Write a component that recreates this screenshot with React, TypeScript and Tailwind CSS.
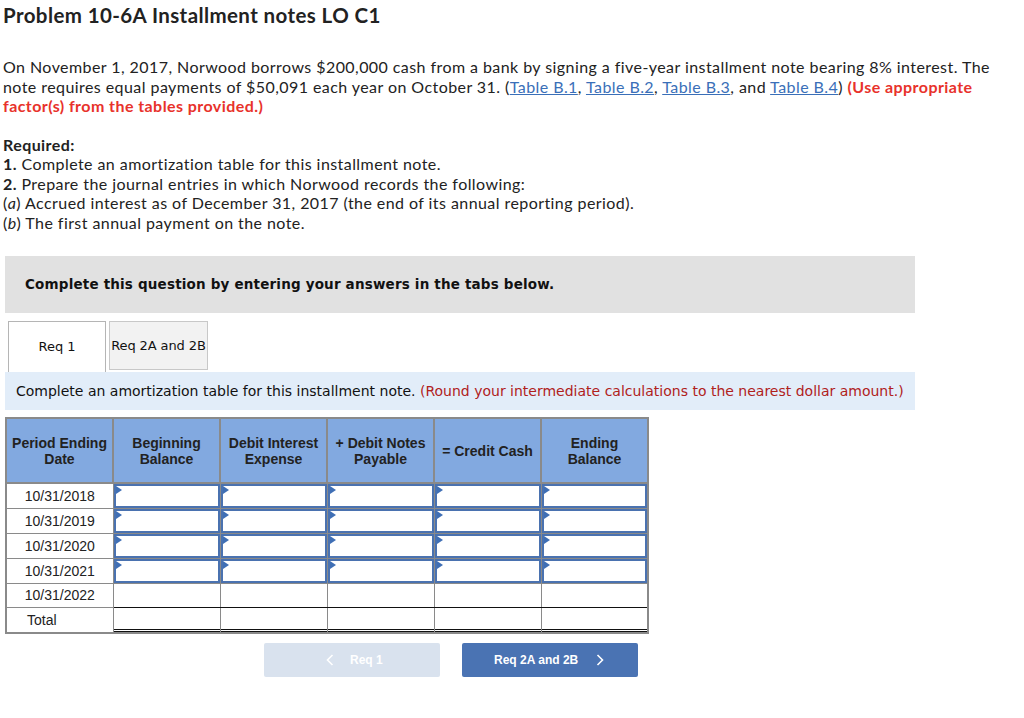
import React from "react";

const dates = ["10/31/2018", "10/31/2019", "10/31/2020", "10/31/2021", "10/31/2022", "Total"];
const headers = [
  ["Period Ending", "Date"],
  ["Beginning", "Balance"],
  ["Debit Interest", "Expense"],
  ["+ Debit Notes", "Payable"],
  ["= Credit Cash"],
  ["Ending", "Balance"],
];

function InputCell() {
  return (
    <td className="border border-[#8a8a8a] p-0 h-[24px] bg-white">
      <div className="relative h-[24px] border-2 border-[#4a72b0] bg-white">
        <svg className="absolute left-0 top-0" width="6" height="8" viewBox="0 0 6 8">
          <polygon points="0,0 6,4 0,8" fill="#3f6fb5" />
        </svg>
      </div>
    </td>
  );
}

function Chevron({ dir }: { dir: "left" | "right" }) {
  return (
    <svg width="8" height="12" viewBox="0 0 8 12" fill="none" stroke="white" strokeWidth="1.6">
      {dir === "left" ? <polyline points="6.5,1 1.5,6 6.5,11" /> : <polyline points="1.5,1 6.5,6 1.5,11" />}
    </svg>
  );
}

export default function App() {
  return (
    <div className="w-[1024px] h-[718px] bg-white text-[#222] relative overflow-hidden">
      <div className="pl-[3px] pt-[4px]" style={{ fontFamily: 'Lato, "Open Sans", sans-serif' }}>
        <h1 className="text-[20.5px] font-bold leading-[22px] tracking-[0.4px] text-[#222]">
          Problem 10-6A Installment notes LO C1
        </h1>
        <div className="mt-[31px] text-[16px] leading-[19.5px] tracking-[0.43px] text-[#222]">
          <div className="whitespace-nowrap">
            On November 1, 2017, Norwood borrows $200,000 cash from a bank by signing a five-year installment note bearing 8% interest. The
          </div>
          <div className="whitespace-nowrap">
            note requires equal payments of $50,091 each year on October 31. (
            <span className="text-[#3a6fb8] underline">Table B.1</span>,{" "}
            <span className="text-[#3a6fb8] underline">Table B.2</span>,{" "}
            <span className="text-[#3a6fb8] underline">Table B.3</span>, and{" "}
            <span className="text-[#3a6fb8] underline">Table B.4</span>){" "}
            <span className="text-[#e8322b] font-bold">(Use appropriate</span>
          </div>
          <div className="whitespace-nowrap text-[#e8322b] font-bold">factor(s) from the tables provided.)</div>
        </div>
        <div className="mt-[19px] text-[16px] leading-[19.5px] tracking-[0.43px] text-[#222]">
          <div className="font-bold">Required:</div>
          <div>
            <span className="font-bold">1.</span> Complete an amortization table for this installment note.
          </div>
          <div>
            <span className="font-bold">2.</span> Prepare the journal entries in which Norwood records the following:
          </div>
          <div>
            (<i>a</i>) Accrued interest as of December 31, 2017 (the end of its annual reporting period).
          </div>
          <div>
            (<i>b</i>) The first annual payment on the note.
          </div>
        </div>
      </div>

      <div className="ml-[5px] mt-[24px] w-[910px]">
        <div
          className="h-[57px] bg-[#e1e1e1] flex items-center pl-[20px] text-[13.5px] tracking-[0.18px] font-bold text-[#111]"
          style={{ fontFamily: '"DejaVu Sans", Verdana, sans-serif' }}
        >
          Complete this question by entering your answers in the tabs below.
        </div>
        <div
          className="flex mt-[8px] ml-[3px] gap-[3px] text-[13px] text-[#111]"
          style={{ fontFamily: '"DejaVu Sans", Verdana, sans-serif' }}
        >
          <div className="w-[98px] h-[51px] border border-b-0 border-[#b5b5b5] bg-white flex items-center justify-center">
            Req 1
          </div>
          <div className="w-[99px] h-[49px] border border-[#c8c8c8] bg-[#f2f2f2] flex items-center justify-center tracking-[-0.1px]">
            Req 2A and 2B
          </div>
        </div>
        <div
          className="h-[38px] bg-[#e2edf9] flex items-center pl-[11px] text-[14px] text-[#111]"
          style={{ fontFamily: '"DejaVu Sans", Verdana, sans-serif' }}
        >
          Complete an amortization table for this installment note.&nbsp;
          <span className="text-[#b0211c]">(Round your intermediate calculations to the nearest dollar amount.)</span>
        </div>
      </div>

      <div className="ml-[5px] mt-[7px]" style={{ fontFamily: '"Liberation Sans", Arial, sans-serif' }}>
        <table className="border-collapse border-2 border-[#8a8a8a] text-[14px] text-[#222]">
          <thead>
            <tr>
              {headers.map((h, i) => (
                <th
                  key={i}
                  className="w-[107px] h-[65px] border-2 border-[#8a8a8a] bg-[#82a9e0] font-bold text-[14px] leading-[16px] text-[#222] p-0"
                >
                  {h.map((l, j) => (
                    <div key={j}>{l}</div>
                  ))}
                </th>
              ))}
            </tr>
          </thead>
          <tbody>
            {dates.map((d, r) => (
              <tr key={d}>
                <td
                  className={`h-[24px] border border-[#8a8a8a] p-0 ${
                    d === "Total" ? "text-left pl-[20px]" : "text-center"
                  }`}
                >
                  {d}
                </td>
                {[0, 1, 2, 3, 4].map((c) =>
                  r < 4 ? (
                    <InputCell key={c} />
                  ) : r === 4 ? (
                    <td key={c} className="h-[24px] border border-[#8a8a8a] border-b-[#111] p-0" />
                  ) : (
                    <td key={c} className="h-[24px] border border-[#8a8a8a] p-0">
                      <div className="h-[24px] border-b-[3px] border-double border-[#111]" />
                    </td>
                  )
                )}
              </tr>
            ))}
          </tbody>
        </table>
      </div>

      <div
        className="flex ml-[264px] mt-[9px] gap-[22px] text-[12px] font-bold text-white"
        style={{ fontFamily: '"Liberation Sans", Arial, sans-serif' }}
      >
        <div className="w-[176px] h-[34px] rounded-[2px] bg-[#d9e2ee] flex items-center pl-[62px] gap-[16px]">
          <Chevron dir="left" />
          <span>Req 1</span>
        </div>
        <div className="w-[176px] h-[34px] rounded-[2px] bg-[#4a73b3] flex items-center pl-[32px] gap-[18px]">
          <span>Req 2A and 2B</span>
          <Chevron dir="right" />
        </div>
      </div>
    </div>
  );
}
